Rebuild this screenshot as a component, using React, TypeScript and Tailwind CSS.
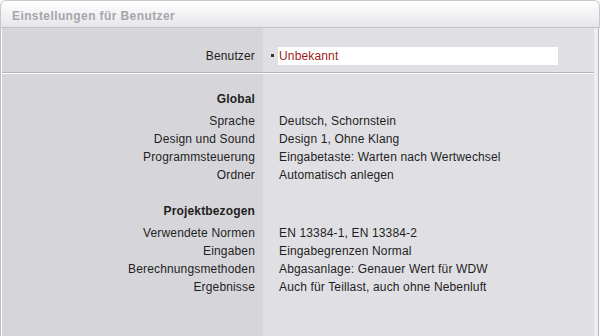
import React from 'react';

interface Row {
  label: string;
  value: string;
}

const globalRows: Row[] = [
  { label: 'Sprache', value: 'Deutsch, Schornstein' },
  { label: 'Design und Sound', value: 'Design 1, Ohne Klang' },
  { label: 'Programmsteuerung', value: 'Eingabetaste: Warten nach Wertwechsel' },
  { label: 'Ordner', value: 'Automatisch anlegen' },
];

const projektRows: Row[] = [
  { label: 'Verwendete Normen', value: 'EN 13384-1, EN 13384-2' },
  { label: 'Eingaben', value: 'Eingabegrenzen Normal' },
  { label: 'Berechnungsmethoden', value: 'Abgasanlage: Genauer Wert für WDW' },
  { label: 'Ergebnisse', value: 'Auch für Teillast, auch ohne Nebenluft' },
];

const Section: React.FC<{ title: string; rows: Row[] }> = ({ title, rows }) => (
  <div className="flex flex-col">
    <div className="mb-[2px] flex h-[22px] items-center">
      <div className="w-[253px] text-right font-bold">{title}</div>
    </div>
    {rows.map((r) => (
      <div key={r.label} className="flex h-[18px] items-center">
        <div className="w-[253px] text-right">{r.label}</div>
        <div className="pl-[24px]">{r.value}</div>
      </div>
    ))}
  </div>
);

export default function App() {
  return (
    <div
      className="flex h-[336px] w-[600px] flex-col overflow-hidden bg-white text-[12px] tracking-[0.15px] text-[#1e1e1e]"
      style={{ fontFamily: '"Liberation Sans", Arial, sans-serif' }}
    >
      <div className="flex h-[28px] items-center rounded-t-[6px] border border-b-[#c4c4c8] border-[#c8c8cc] bg-gradient-to-b from-white to-[#e6e6ea] pl-[11px] pt-[4px]">
        <span className="text-[12px] font-bold tracking-[0.4px] text-[#a6a6aa]">
          Einstellungen für Benutzer
        </span>
      </div>
      <div className="relative flex flex-1 border-l border-[#bcbcc2] pl-px">
        <div className="flex flex-1 flex-col bg-[linear-gradient(to_right,#d6d6da_0,#d6d6da_261px,#e0e0e4_261px)]">
          <div className="flex h-[44px] items-center pt-[11px]">
            <div className="w-[253px] text-right">Benutzer</div>
            <div className="ml-[16px] flex h-[18px] w-[287px] items-center">
              <div className="mr-[4px] h-[3px] w-[3px] bg-[#333]" />
              <div className="flex h-full flex-1 items-center bg-white pl-[1px] text-[#9b1c1c]">Unbekannt</div>
            </div>
          </div>
          <div className="h-[2px] border-t border-[#b4b4b8] bg-white" />
          <div className="pt-[14px]">
            <Section title="Global" rows={globalRows} />
          </div>
          <div className="pt-[16px]">
            <Section title="Projektbezogen" rows={projektRows} />
          </div>
        </div>
        <div className="w-[4px] bg-[#eeeef1]" />
        <div className="w-[1px] bg-[#b4b4ba]" />
        <div className="w-[1px] bg-white" />
      </div>
    </div>
  );
}
